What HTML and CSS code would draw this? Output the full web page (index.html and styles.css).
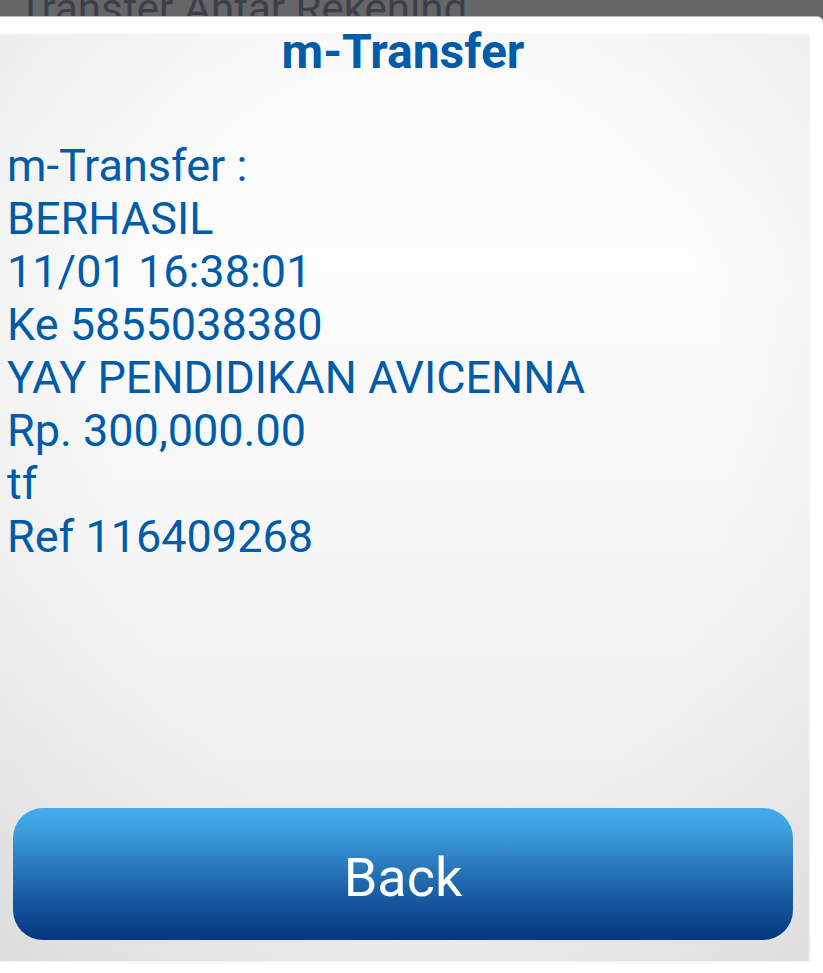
FILE: index.html
```html
<!DOCTYPE html>
<html lang="id">
<head>
<meta charset="utf-8">
<meta name="viewport" content="width=device-width, initial-scale=1">
<title>m-Transfer</title>
<link rel="stylesheet" href="styles.css">
</head>
<body>
<header class="page-header"><span class="page-title">Transfer Antar Rekening</span></header>
<main class="dialog">
  <section class="panel">
    <h1 class="title">m-Transfer</h1>
    <div class="receipt">
      <p>m-Transfer :</p>
      <p>BERHASIL</p>
      <p>11/01 16:38:01</p>
      <p>Ke 5855038380</p>
      <p>YAY PENDIDIKAN AVICENNA</p>
      <p>Rp. 300,000.00</p>
      <p>tf</p>
      <p>Ref 116409268</p>
    </div>
    <button class="back" type="button">Back</button>
  </section>
</main>
</body>
</html>
```
FILE: styles.css
```css
* {
  box-sizing: border-box;
}

body {
  margin: 0;
  min-height: 100vh;
  display: flex;
  flex-direction: column;
  background: #666;
  font-family: Roboto, "Liberation Sans", sans-serif;
  color: #005ca8;
}

.page-header {
  height: 16px;
  padding-left: 18px;
  display: flex;
  align-items: flex-end;
  overflow: hidden;
}

.page-title {
  flex: none;
  font-size: 42px;
  line-height: 14px;
  color: #3b3f49;
}

.dialog {
  flex: 1;
  display: flex;
  padding: 18px 14px 12px 0;
  background: #fff;
  border-top: 1px solid #b5b5b5;
  border-top-right-radius: 6px;
}

.panel {
  flex: 1;
  display: flex;
  flex-direction: column;
  padding: 0 16px 21px 13px;
  background:
    radial-gradient(ellipse 75% 85% at 52% 45%, rgba(0, 0, 0, 0) 50%, rgba(0, 0, 0, 0.03) 75%, rgba(0, 0, 0, 0.08) 100%),
    linear-gradient(#fafafa, #fcfcfc 25%, #f6f6f6 55%, #eee 85%, #ececec);
  box-shadow: 0 0 3px #e4e4e4;
}

.title {
  margin: 0 0 70px;
  font-size: 48px;
  line-height: 34px;
  font-weight: 700;
  text-align: center;
}

.receipt {
  margin-left: -6px;
  font-size: 45px;
  line-height: 53px;
}

.receipt p {
  margin: 0;
}

.back {
  height: 132px;
  margin-top: auto;
  padding: 8px 0 0;
  border: 0;
  border-radius: 30px;
  background: linear-gradient(#43abec, #3ea2e2 14%, #2069ae 56%, #083f87 92%, #05377c);
  box-shadow: 0 0 2px #d3efff;
  color: #fff;
  font: inherit;
  font-size: 54px;
  line-height: 64px;
}
```
